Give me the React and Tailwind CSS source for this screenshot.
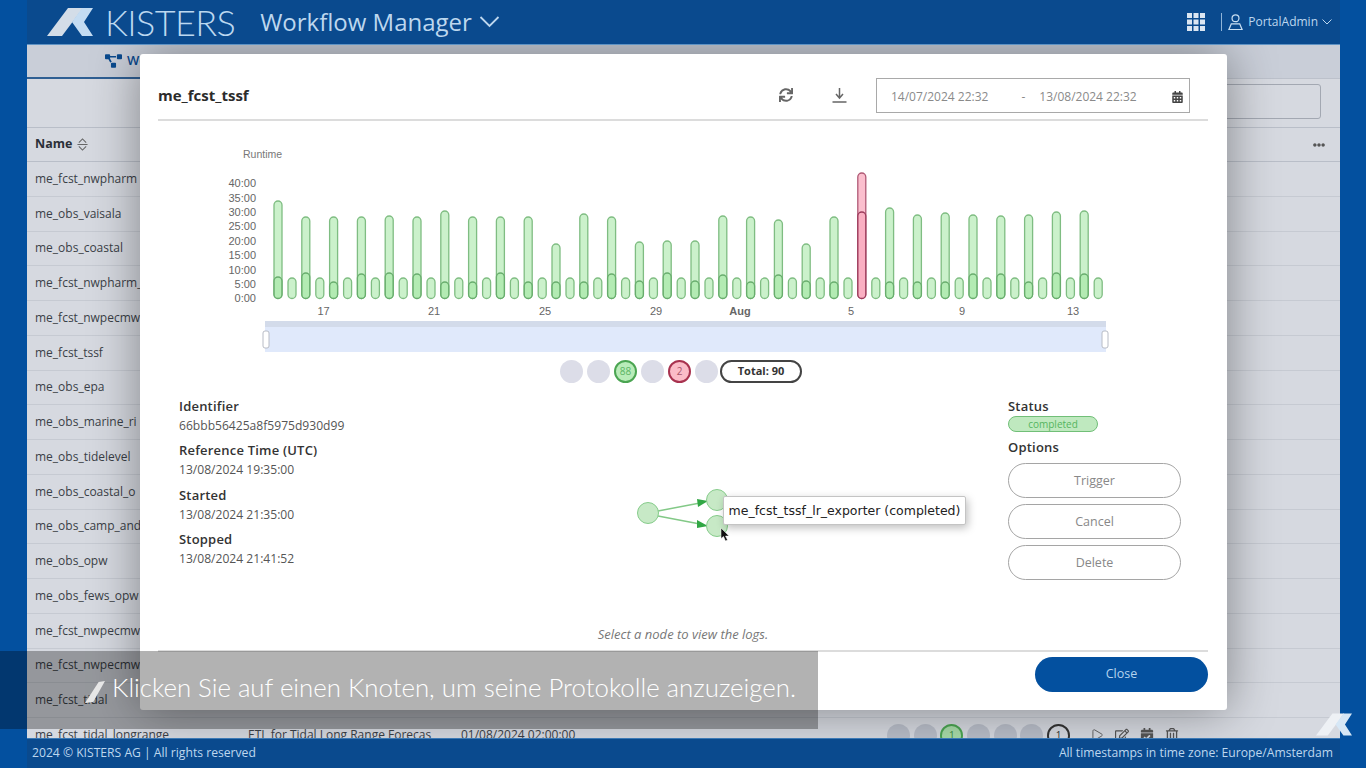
import React from 'react';
import { Play } from 'lucide-react';
import { FaProjectDiagram, FaSync, FaCalendarAlt, FaEllipsisH, FaRegEdit, FaCalendarCheck, FaRegTrashAlt } from 'react-icons/fa';

const ROWS = [
  'me_fcst_nwpharm',
  'me_obs_vaisala',
  'me_obs_coastal',
  'me_fcst_nwpharm_',
  'me_fcst_nwpecmw',
  'me_fcst_tssf',
  'me_obs_epa',
  'me_obs_marine_ri',
  'me_obs_tidelevel',
  'me_obs_coastal_o',
  'me_obs_camp_and',
  'me_obs_opw',
  'me_obs_fews_opw',
  'me_fcst_nwpecmw',
  'me_fcst_nwpecmw',
  'me_fcst_tidal',
];

// top of the tall bar, top of the short bar on top of it
const BARS = [
  [201, 277], [217, 273], [217, 282], [217, 274], [216, 273], [217, 274], [211, 282], [217, 282],
  [217, 273], [217, 282], [244, 282], [214, 282], [217, 274], [242, 281], [241, 273], [241, 281],
  [216, 275], [217, 282], [220, 275], [244, 281], [217, 282], [173, 212], [208, 282], [215, 282],
  [213, 282], [215, 274], [216, 274], [215, 282], [212, 273], [211, 274],
];

const Y_TICKS = [
  ['40:00', 187], ['35:00', 201.5], ['30:00', 216], ['25:00', 230], ['20:00', 244.5],
  ['15:00', 259], ['10:00', 273.5], ['5:00', 288], ['0:00', 302],
];

const X_TICKS = [['17', 323.5], ['21', 434], ['25', 545], ['29', 656], ['Aug', 740], ['5', 851], ['9', 962], ['13', 1073]];

const KistersMark = ({ className, left = '#d3dde8', right = '#c4dcf2' }) => (
  <svg viewBox="0 0 46 28" className={className}>
    <polygon points="0,28 21,0 36,0 15,28" fill={left} />
    <polygon points="46,0 35,0 25,14 35,28 46,28 37,14" fill={right} />
  </svg>
);

const Bar = ({ x, top, color, edge }) => (
  <rect x={x - 4} y={top} width="8" height={298.5 - top} rx="4" fill={color} stroke={edge} strokeWidth="1.3" />
);

const RuntimeChart = () => (
  <svg viewBox="158 121 1050 232" className="block w-[1050px] h-[232px]" fontFamily="'Liberation Sans', sans-serif">
    <text x="243" y="158" fontSize="10.5" fill="#777">Runtime</text>
    {Y_TICKS.map(([label, y]) => (
      <text key={label} x="256" y={y} fontSize="11" fill="#666" textAnchor="end">{label}</text>
    ))}
    {BARS.map(([tall, short], i) => {
      const x = 278 + i * 27.8;
      const failed = i === 21;
      const color = failed ? 'rgba(250,170,190,0.75)' : 'rgba(160,230,160,0.55)';
      const edge = failed ? '#b05a75' : '#7fbd82';
      return (
        <g key={i}>
          <Bar x={x} top={tall} color={color} edge={edge} />
          <Bar x={x} top={short} color={color} edge={failed ? '#9c3c5c' : '#68ad6d'} />
          <Bar x={x + 14} top={278} color="rgba(160,230,160,0.55)" edge="#7fbd82" />
        </g>
      );
    })}
    {X_TICKS.map(([label, x]) => (
      <text key={label} x={x} y="315" fontSize="11" fill="#666" textAnchor="middle" fontWeight={label === 'Aug' ? 'bold' : 'normal'}>{label}</text>
    ))}
    <rect x="265" y="321" width="841" height="31" fill="#e0e9fb" />
    <rect x="265" y="321" width="841" height="6" fill="#d3dbea" />
    <rect x="263" y="331" width="6" height="17" rx="2" fill="#fff" stroke="#b8bcc6" />
    <rect x="1102" y="331" width="6" height="17" rx="2" fill="#fff" stroke="#b8bcc6" />
  </svg>
);

const Dot = ({ children, className = 'bg-[#dcdde8]' }) => (
  <div className={`w-[23px] h-[23px] rounded-full flex items-center justify-center text-[10px] ${className}`}>{children}</div>
);

const Field = ({ label, value }) => (
  <div className="h-[44.3px]">
    <div className="text-[13px] leading-[17px] tracking-[0.2px] font-semibold text-[#333]">{label}</div>
    <div className="text-[12.1px] leading-[21px] text-[#555]">{value}</div>
  </div>
);

const OptionButton = ({ children }) => (
  <button className="w-[173px] h-[35px] pt-[2px] rounded-full border-[1.5px] border-[#a5a5a5] bg-white text-[12.5px] text-[#888]">{children}</button>
);

const DagPreview = () => (
  <svg viewBox="630 480 100 60" className="w-[100px] h-[60px]">
    <path d="M658 511 L700 503 M658 516 L700 524" stroke="#83c987" strokeWidth="1.5" />
    <polygon points="697,499 708,501 698,507" fill="#31a744" />
    <polygon points="697,520 708,526 697,528" fill="#31a744" />
    <circle cx="648" cy="513" r="10.5" fill="#c7e9c6" stroke="#86cc8b" />
    <circle cx="717" cy="500" r="10.5" fill="#c7e9c6" stroke="#86cc8b" />
    <circle cx="717" cy="526" r="10.5" fill="#c7e9c6" stroke="#86cc8b" />
  </svg>
);

export default function App() {
  return (
    <div className="relative w-[1366px] h-[768px] overflow-hidden bg-[#03509f] font-['Open_Sans',sans-serif]">
      <div className="mx-[27px] w-[1313px] h-full flex flex-col bg-[#d6d9e0]">
        {/* Top bar */}
        <header className="relative z-20 h-[45px] shrink-0 bg-[#0a4a8e] border-b border-[#5f93c4] flex items-center text-[#bdd7ee]">
          <KistersMark className="ml-[20px] w-[46px] h-[28px]" />
          <span className="ml-[12px] text-[36px] leading-none font-['Lato',sans-serif] font-light tracking-[-0.6px] text-[#bcd8f0]">KISTERS</span>
          <span className="ml-[25px] text-[24px] leading-none">Workflow Manager</span>
          <svg viewBox="0 0 20 12" className="ml-[7px] w-[21px] h-[12px]" fill="none" stroke="#bdd7ee" strokeWidth="1.8">
            <path d="M1 1 L10 10 L19 1" />
          </svg>
          <svg viewBox="0 0 18 18" className="ml-auto w-[18px] h-[18px]" fill="#dbe6f2">
            <rect x="0" y="0" width="5" height="5" /><rect x="6.5" y="0" width="5" height="5" /><rect x="13" y="0" width="5" height="5" />
            <rect x="0" y="6.5" width="5" height="5" /><rect x="6.5" y="6.5" width="5" height="5" /><rect x="13" y="6.5" width="5" height="5" />
            <rect x="0" y="13" width="5" height="5" /><rect x="6.5" y="13" width="5" height="5" /><rect x="13" y="13" width="5" height="5" />
          </svg>
          <div className="ml-[16px] w-px h-[18px] bg-[#8fb4d8]" />
          <svg viewBox="0 0 16 18" className="ml-[6px] w-[15px] h-[18px]" fill="none" stroke="#c9dff2" strokeWidth="1.3">
            <circle cx="8" cy="5" r="3.7" />
            <path d="M3.5 11 H12.5 L15 17 H1 Z" />
          </svg>
          <span className="ml-[5px] text-[12px] text-[#bdd7ee]">PortalAdmin</span>
          <svg viewBox="0 0 10 6" className="ml-[4px] mr-[8px] w-[10px] h-[6px]" fill="none" stroke="#bdd7ee">
            <path d="M0.5 0.5 L5 5 L9.5 0.5" />
          </svg>
        </header>

        {/* Tabs */}
        <div className="h-[34px] shrink-0 flex border-b border-[#bcc1cb] bg-[#c9ced8]">
          <div className="w-[366px] h-[34px] pl-[78px] flex items-center gap-[5px] border-b-2 border-[#2f5f93] text-[13px] font-semibold text-[#0a4a8e]">
            <FaProjectDiagram className="w-[17px] h-[14px]" />
            <span>Workflows</span>
          </div>
          <div className="flex items-start pt-[8px] text-[#666]">
            <FaProjectDiagram className="w-[9px] h-[9px]" />
          </div>
        </div>

        {/* Toolbar */}
        <div className="h-[49px] shrink-0 flex items-center justify-end pb-[3px] pr-[19px] border-b border-[#b9bec8]">
          <div className="w-[300px] h-[35px] rounded-[3px] border border-[#a3a8b2]" />
        </div>

        {/* Table header */}
        <div className="h-[34px] shrink-0 flex items-center pl-[8px] pr-[15px] border-b border-[#b9bec8]">
          <span className="text-[12.5px] font-bold text-[#2b3038]">Name</span>
          <svg viewBox="0 0 12 14" className="ml-[5px] w-[11px] h-[13px]" fill="none" stroke="#666" strokeWidth="1.1">
            <path d="M2 5 L6 1 L10 5 M0.5 7 H11.5 M2 9 L6 13 L10 9" />
          </svg>
          <FaEllipsisH className="ml-auto w-[12px] h-[12px] text-[#555]" />
        </div>

        {/* Table rows */}
        <div className="flex-1 min-h-0 overflow-hidden">
          {ROWS.map((name, i) => (
            <div key={i} className="h-[34.75px] flex items-center pl-[8px] border-b border-[#c6cad2] text-[12px] text-[#3a3f47]">{name}</div>
          ))}
          <div className="relative h-[34.75px] flex items-center pl-[8px] text-[12px] text-[#3a3f47]">
            <span className="w-[213px]">me_fcst_tidal_longrange</span>
            <span className="w-[213px]">ETL for Tidal Long Range Forecas</span>
            <span className="w-[426px]">01/08/2024 02:00:00</span>
            <div className="flex gap-[3.7px]">
              <Dot className="bg-[#b9bec9]" />
              <Dot className="bg-[#b9bec9]" />
              <Dot className="bg-[#a9dca9] border-2 border-[#4ba552] text-[#3f8f47]">1</Dot>
              <Dot className="bg-[#b9bec9]" />
              <Dot className="bg-[#b9bec9]" />
              <Dot className="bg-[#b9bec9]" />
              <Dot className="border-2 border-[#333] text-[#333]">1</Dot>
            </div>
            <div className="ml-[20px] flex gap-[11px] text-[#555]">
              <Play className="w-[14px] h-[14px]" strokeWidth={1.5} />
              <FaRegEdit className="w-[14px] h-[14px]" />
              <FaCalendarCheck className="w-[14px] h-[14px]" />
              <FaRegTrashAlt className="w-[14px] h-[14px]" />
            </div>
          </div>
        </div>

        {/* Footer */}
        <footer className="relative z-20 h-[30px] shrink-0 bg-[#0a4a8e] border-t border-[#3d7ab5] flex items-center justify-between pl-[5px] pr-[7px] text-[12.15px] text-[#bdd7ee]">
          <span>2024 © KISTERS AG | All rights reserved</span>
          <span>All timestamps in time zone: Europe/Amsterdam</span>
        </footer>
      </div>

      {/* Run details dialog */}
      <div className="absolute z-10 left-[140px] top-[54px] w-[1087px] h-[656px] bg-white rounded-[3px] shadow-[0_0_50px_rgba(0,0,0,0.4)] pl-[18px] pr-[19px] flex flex-col">
        <div className="h-[67px] pt-[17px] shrink-0 flex items-center border-b-2 border-[#dcdcdc]">
          <h2 className="text-[15px] font-bold text-[#2b2b2b]">me_fcst_tssf</h2>
          <FaSync className="ml-auto w-[14px] h-[14px] text-[#666]" />
          <svg viewBox="0 0 14 15" className="ml-[39px] w-[15px] h-[15px]" fill="none" stroke="#666" strokeWidth="1.5">
            <path d="M7 0 V9 M3.5 6 L7 10 L10.5 6 M0 14 H14" />
          </svg>
          <div className="ml-[29px] mr-[18px] w-[314px] h-[35px] pt-[3px] border border-[#a9a9a9] flex items-center pl-[14px] pr-[6px] text-[12px] text-[#8a8a8a]">
            <span>14/07/2024 22:32</span>
            <span className="ml-[33px]">-</span>
            <span className="ml-[14px]">13/08/2024 22:32</span>
            <FaCalendarAlt className="ml-auto w-[11px] h-[12px] text-[#444]" />
          </div>
        </div>

        <RuntimeChart />

        {/* Outcome legend */}
        <div className="ml-[402px] mt-[7px] h-[23px] shrink-0 flex items-center gap-[4px]">
          <Dot />
          <Dot />
          <Dot className="bg-[#b9ecb9] border-2 border-[#4ba552] text-[#5cb565]">88</Dot>
          <Dot />
          <Dot className="bg-[#fbbcc8] border-2 border-[#a8324f] text-[#a8566c]">2</Dot>
          <Dot />
          <div className="-ml-[2px] w-[82px] h-[23px] rounded-full border-2 border-[#444] flex items-center justify-center text-[11px] font-bold text-[#333]">Total: 90</div>
        </div>

        {/* Run information */}
        <div className="mt-[15px] flex-1 flex relative">
          <div className="ml-[21px] w-[300px]">
            <Field label="Identifier" value="66bbb56425a8f5975d930d99" />
            <Field label="Reference Time (UTC)" value="13/08/2024 19:35:00" />
            <Field label="Started" value="13/08/2024 21:35:00" />
            <Field label="Stopped" value="13/08/2024 21:41:52" />
          </div>
          <div className="ml-[151px] mt-[82px] relative w-[100px] h-[60px]">
            <DagPreview />
            <div className="absolute left-[93px] top-[16px] w-[243px] h-[29px] pt-[2px] bg-white border border-[#c4c4c4] rounded-[2px] shadow-[2px_3px_8px_rgba(0,0,0,0.25)] flex items-center justify-center whitespace-nowrap font-['DejaVu_Sans',sans-serif] text-[12.5px] text-[#222]">
              me_fcst_tssf_lr_exporter (completed)
            </div>
            <svg viewBox="0 0 10 14" className="absolute left-[90px] top-[48px] w-[10px] h-[14px]">
              <path d="M1 0 V10.5 L3.5 8.5 L5.5 13 L7.5 12 L5.5 8 H9 Z" fill="#111" stroke="#fff" strokeWidth="0.5" />
            </svg>
          </div>
          <div className="absolute left-[850px] top-0 w-[173px]">
            <div className="text-[13px] leading-[17px] tracking-[0.2px] font-semibold text-[#333]">Status</div>
            <div className="mt-[1px] h-[16px] w-[90px] rounded-full border border-[#71bf78] bg-[#bfe9bf] flex items-center justify-center text-[10px] text-[#55b560]">completed</div>
            <div className="mt-[7px] text-[13px] leading-[17px] tracking-[0.2px] font-semibold text-[#333]">Options</div>
            <div className="mt-[7px] flex flex-col gap-[6px]">
              <OptionButton>Trigger</OptionButton>
              <OptionButton>Cancel</OptionButton>
              <OptionButton>Delete</OptionButton>
            </div>
          </div>
          <div className="absolute left-0 right-0 top-[227px] text-center text-[13px] italic text-[#777]">Select a node to view the logs.</div>
        </div>

        <div className="h-[60px] shrink-0 border-t-2 border-[#dcdcdc] flex items-start justify-end pt-[5px]">
          <button className="w-[173px] h-[35px] rounded-full bg-[#03509f] text-[12.5px] text-[#b4d3ee]">Close</button>
        </div>
      </div>

      {/* Video caption */}
      <div className="absolute z-30 left-0 top-[651px] w-[818px] h-[78px] bg-black/30 flex items-center pl-[85px] pb-[6px]">
        <svg viewBox="0 0 22 24" className="w-[20px] h-[24px] mt-[10px]">
          <polygon points="0,24 15,1 22,0 9,23" fill="#e6e6e6" />
        </svg>
        <span className="ml-[7px] font-['Lato',sans-serif] font-light text-[25.8px] text-white whitespace-nowrap">Klicken Sie auf einen Knoten, um seine Protokolle anzuzeigen.</span>
      </div>

      {/* Corner watermark */}
      <KistersMark className="absolute z-30 left-[1316px] top-[713px] w-[36px] h-[23px]" left="#eef1f5" right="#d6e7f6" />
    </div>
  );
}
